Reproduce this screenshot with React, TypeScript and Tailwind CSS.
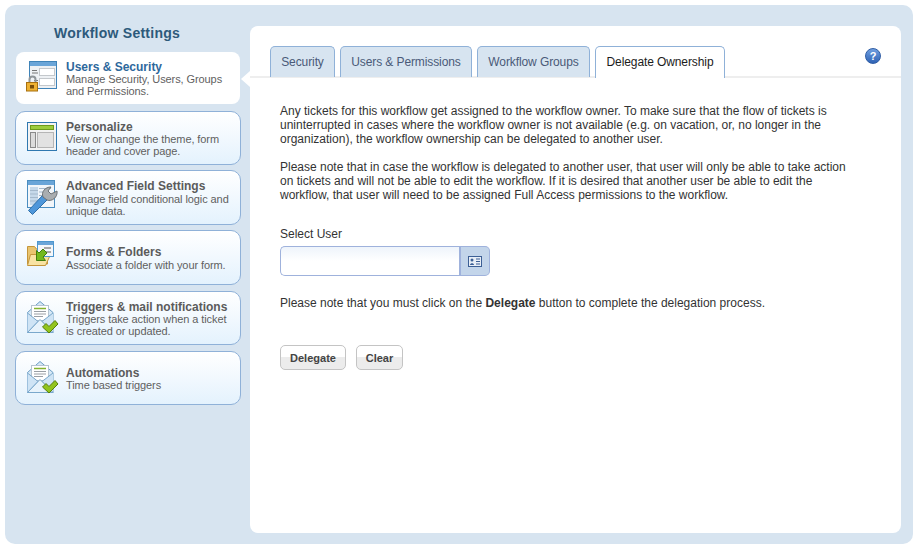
import React from 'react';

const SecurityIcon = () => (
  <svg width="36" height="36" viewBox="0 0 36 36">
    <rect x="3.500" y="1.500" width="27" height="27" fill="#eef1f4" stroke="#3f83b8" />
    <rect x="4" y="2" width="26" height="4" fill="#6aa5d8" />
    <rect x="13.500" y="8.500" width="15" height="7" fill="#fff" stroke="#c4c8cc" />
    <rect x="13.500" y="18.500" width="15" height="7" fill="#fff" stroke="#c4c8cc" />
    <path d="M6 10.500h5M6 13h6M8 20.500h4" stroke="#777" />
    <path d="M3.500 22v-2.500a3 3 0 0 1 6 0V22" fill="none" stroke="#8f9599" strokeWidth="2" />
    <rect x="0.500" y="22.500" width="11" height="8.500" fill="#eeb132" stroke="#a8700f" />
    <rect x="4" y="25" width="4" height="3.500" fill="#7a4e08" />
  </svg>
);

const PersonalizeIcon = () => (
  <svg width="36" height="36" viewBox="0 0 36 36">
    <rect x="1.500" y="2.500" width="29" height="28" fill="#f3f3f3" stroke="#2f78b0" />
    <rect x="4.500" y="5.500" width="23" height="4" fill="#9ccc3c" stroke="#6d9a1c" />
    <rect x="4.500" y="12.500" width="5" height="15" fill="#dcdcdc" stroke="#8a8a8a" />
    <rect x="11.500" y="12.500" width="16" height="15" fill="#e2e2e2" stroke="#b5b5b5" />
  </svg>
);

const AdvancedIcon = () => (
  <svg width="36" height="36" viewBox="0 0 36 36">
    <rect x="1.500" y="0.500" width="27" height="27" fill="#f2f6fa" stroke="#4a8dc0" />
    <rect x="2" y="1" width="26" height="4" fill="#6aa5d8" />
    <rect x="4" y="7" width="8" height="18" fill="#c6d9ea" />
    <path d="M13 8.500h12M13 12h10M13 15.500h7M13 19h5M4 10.500h8M4 14h8M4 17.500h8M4 21h8" stroke="#a5b9cc" />
    <path d="M6.500 34.500l-4-4 14-15 5 4z" fill="#4f97da" stroke="#2f6fa8" />
    <path d="M17 17c-2-5 2-10 8-10l-3 4 3 3 6-3c1 6-5 11-10 9z" fill="#a9adb0" stroke="#6c7175" />
  </svg>
);

const FolderIcon = () => (
  <svg width="36" height="36" viewBox="0 0 36 36">
    <path d="M1.500 6.500h7l2 2.500h11v15h-20z" fill="#e9c46f" stroke="#c4953a" />
    <path d="M1.500 25.500l3-11h20l-5 11z" fill="#f8e3a3" stroke="#c4953a" />
    <rect x="11.500" y="1.500" width="16" height="15" fill="#f4f7fa" stroke="#4d97cf" />
    <rect x="12" y="2" width="15" height="3" fill="#6aa5d8" />
    <path d="M18 8h7M18 12h7" stroke="#a8a8a8" strokeWidth="2" />
    <path d="M10.500 20.500v-10l2.500 2.500 4-4 4 4-4 4 2.500 3.500z" fill="#72b81e" stroke="#3f7d0c" />
  </svg>
);

const MailIcon = () => (
  <svg width="36" height="36" viewBox="0 0 36 36">
    <path d="M1.500 12.500L14 1.500l13 11v20h-25.500z" fill="#d6e8f6" stroke="#6d9fc6" />
    <rect x="5.500" y="5.500" width="17" height="15" fill="#fff" stroke="#b6c4d0" />
    <path d="M8 8.500h12" stroke="#84b32e" strokeWidth="1.500" />
    <path d="M8 11.500h12M8 14h12M8 16.500h9" stroke="#9a9fa5" />
    <path d="M1.500 13L12 21.500 1.500 32.500M27 13L16 21.500 27 32.500" fill="#cfe4f5" stroke="#7aa8cc" />
    <path d="M1.500 32.500L14 19.500l13 13z" fill="#e8f3fb" stroke="#7aa8cc" />
    <path d="M16.500 27l3.500-3.500 3 3 6-6 3 3.500-9 9z" fill="#92c41d" stroke="#567f0a" />
  </svg>
);

const menu = [
  { title: 'Users & Security', desc: ['Manage Security, Users, Groups', 'and Permissions.'], icon: <SecurityIcon />, cls: 'h-[52px] mt-0', tall: false },
  { title: 'Personalize', desc: ['View or change the theme, form', 'header and cover page.'], icon: <PersonalizeIcon />, cls: 'h-[54px] mt-[7px]', tall: false },
  { title: 'Advanced Field Settings', desc: ['Manage field conditional logic and', 'unique data.'], icon: <AdvancedIcon />, cls: 'h-[55px] mt-[5px]', tall: true },
  { title: 'Forms & Folders', desc: ['Associate a folder with your form.'], icon: <FolderIcon />, cls: 'h-[55px] mt-[5px]', tall: true },
  { title: 'Triggers & mail notifications', desc: ['Triggers take action when a ticket', 'is created or updated.'], icon: <MailIcon />, cls: 'h-[54px] mt-[6px]', tall: false },
  { title: 'Automations', desc: ['Time based triggers'], icon: <MailIcon />, cls: 'h-[54px] mt-[6px]', tall: false },
];

const tabs = [
  { label: 'Security', cls: 'w-[65px]' },
  { label: 'Users & Permissions', cls: 'w-[132px]' },
  { label: 'Workflow Groups', cls: 'w-[113px]' },
];

export default function App() {
  return (
    <div className="w-[919px] h-[549px] bg-white p-[5px] font-['Liberation_Sans',Arial,sans-serif] text-[12px] overflow-hidden">
      <div className="w-[908px] h-[539px] bg-[#d7e4f0] rounded-[10px] flex">
        <div className="w-[245px] pl-[10px] shrink-0">
          <h1 className="mt-[19px] h-[28px] w-[204px] text-center text-[14px] leading-[18px] font-bold tracking-[0.25px] text-[#2d5a7b]">Workflow Settings</h1>
          {menu.map((m, i) => (
            <div
              key={m.title}
              className={i === 0
                ? `relative flex items-center w-[224px] ml-px bg-white rounded-[8px] ${m.cls}`
                : `flex items-center w-[226px] border border-[#8fb1d8] rounded-[10px] bg-gradient-to-b from-white to-[#e4f2fd] ${m.cls}`}
            >
              <div className="w-[50px] pl-[10px] shrink-0 flex">{m.icon}</div>
              <div className={`${m.tall ? 'pt-[2px]' : 'pt-[3px]'} pb-[1px] leading-[12px] text-[11px] tracking-[-0.09px] text-[#5f5f5f] whitespace-nowrap`}>
                <div className={`text-[12px] leading-[12px] font-bold tracking-normal ${m.tall ? 'mb-px' : ''} ${i === 0 ? 'text-[#2d689c]' : 'text-[#5b5b5b]'}`}>{m.title}</div>
                {m.desc.map(d => <div key={d}>{d}</div>)}
              </div>
              {i === 0 && <div className="absolute left-[225px] top-[19px] w-0 h-0 border-y-[8px] border-y-transparent border-r-[9px] border-r-white" />}
            </div>
          ))}
        </div>
        <div className="w-[651px] h-[507px] mt-[21px] bg-white rounded-[8px] relative">
          <div className="flex gap-[5px] pl-[20px] pt-[20px] h-[52px] border-b-2 border-[#eeeeee]">
            {tabs.map(t => (
              <div key={t.label} className={`${t.cls} h-[31px] bg-[#d7e4f0] border border-b-0 border-[#8fb1d8] rounded-t-[5px] text-center leading-[30px] tracking-[-0.1px] text-[#4a5a78]`}>{t.label}</div>
            ))}
            <div className="w-[130px] h-[32px] bg-white border border-b-0 border-[#8fb1d8] rounded-t-[5px] text-center leading-[30px] tracking-[-0.1px] text-[#1c1c1c]">Delegate Ownership</div>
          </div>
          <div className="absolute right-[20px] top-[22px] w-[16px] h-[16px] rounded-full bg-gradient-to-b from-[#6f9fe0] to-[#2f63b5] border border-[#2f5da5] text-white text-[11px] font-bold text-center leading-[14px]">?</div>
          <div className="pl-[30px] pt-[26px] leading-[14px] text-[#333333]">
            <p className="w-[580px]">Any tickets for this workflow get assigned to the workflow owner. To make sure that the flow of tickets is<br />uninterrupted in cases where the workflow owner is not available (e.g. on vacation, or, no longer in the<br />organization), the workflow ownership can be delegated to another user.</p>
            <p className="w-[580px] mt-[14px]">Please note that in case the workflow is delegated to another user, that user will only be able to take action<br />on tickets and will not be able to edit the workflow. If it is desired that another user be able to edit the<br />workflow, that user will need to be assigned Full Access permissions to the workflow.</p>
            <div className="mt-[25px] h-[14px]">Select User</div>
            <div className="mt-[5px] flex w-[210px] h-[30px]">
              <div className="w-[179px] border border-r-0 border-[#9fb2dc] rounded-l-[5px] bg-gradient-to-b from-[#eef4fb] to-white to-50%" />
              <div className="w-[31px] border border-l-2 border-[#9fb2dc] rounded-r-[5px] bg-[#c3d5ea] flex items-center justify-center">
                <svg width="14" height="11" viewBox="0 0 14 11">
                  <rect x="0.500" y="0.500" width="13" height="10" fill="#e8eef6" stroke="#3c5f95" />
                  <circle cx="4" cy="4" r="1.500" fill="#3c5f95" />
                  <path d="M2 9c0-2.500 4-2.500 4 0z" fill="#3c5f95" />
                  <path d="M8 3h4M8 5.500h4M8 8h4" stroke="#3c5f95" />
                </svg>
              </div>
            </div>
            <p className="mt-[20px]">Please note that you must click on the <b>Delegate</b> button to complete the delegation process.</p>
            <div className="mt-[35px] flex gap-[10px]">
              <button className="w-[66px] h-[25px] border border-[#c4c4c4] rounded-[5px] bg-gradient-to-b from-white from-50% to-[#ececec] to-50% font-bold text-[11px] text-[#444444]">Delegate</button>
              <button className="w-[47px] h-[25px] border border-[#c4c4c4] rounded-[5px] bg-gradient-to-b from-white from-50% to-[#ececec] to-50% font-bold text-[11px] text-[#444444]">Clear</button>
            </div>
          </div>
        </div>
      </div>
    </div>
  );
}
